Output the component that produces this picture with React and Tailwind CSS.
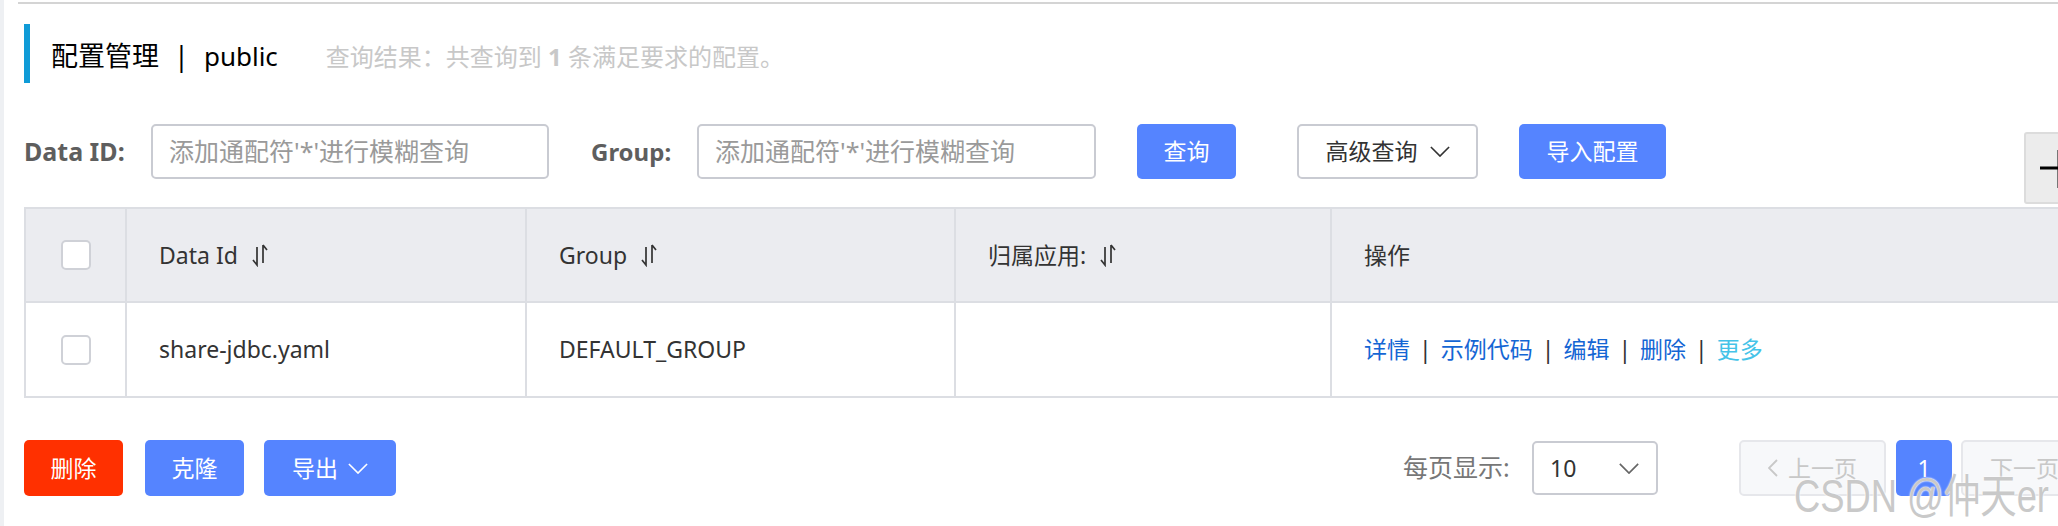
import React from 'react'

function Chevron({ className = '' }) {
  return (
    <svg viewBox="0 0 22 12" className={className} fill="none" stroke="currentColor" strokeWidth="1.8">
      <path d="M1 1l10 10L21 1" />
    </svg>
  )
}

function SortIcon() {
  return (
    <svg viewBox="0 0 16 24" className="ml-[14px] h-[24px] w-[16px]" fill="none" stroke="#333" strokeWidth="1.7">
      <path d="M5 4v18l-4-5" />
      <path d="M11 2v18M11 2l4 5" />
    </svg>
  )
}

function Checkbox() {
  return <span className="block h-[30px] w-[30px] rounded-[5px] border-2 border-[#cfd1d7] bg-white" />
}

export default function App() {
  const headCell = 'flex items-center border-r-2 border-b-2 border-[#dcdee3] bg-[#ebecf0] pl-[32px] text-[23px]'
  const bodyCell = 'flex items-center border-r-2 border-b-2 border-[#dcdee3] pl-[32px] text-[23px]'
  const actions = ['详情', '示例代码', '编辑', '删除']

  return (
    <div className="relative h-[526px] w-full overflow-hidden border-l-4 border-[#eef0f3] bg-white font-['Noto_Sans','Noto_Sans_CJK_SC',sans-serif] text-[#333]">
      {/* top rule */}
      <div className="ml-[14px] mt-[2px] h-[2px] bg-[#d4d4d4]" />

      <div className="w-[2104px] pl-[20px]">
        {/* Title */}
        <div className="mt-[20px] flex h-[59px] items-center border-l-[6px] border-[#0f9bd7] pl-[21px] pt-[6px]">
          <span className="text-[27px] text-black">配置管理</span>
          <span className="mx-[15px] text-[27px] text-black">|</span>
          <span className="text-[26px] text-black">public</span>
          <span className="ml-[48px] text-[24px] text-[#c8c8c8]">
            查询结果：共查询到 <b className="font-bold">1</b> 条满足要求的配置。
          </span>
        </div>

        {/* Filters */}
        <div className="mt-[41px] flex h-[55px] items-center">
          <span className="w-[103px] whitespace-nowrap text-[25px] font-bold text-[#5e5e5e]">Data ID:</span>
          <div className="ml-[24px] flex h-full w-[398px] items-center whitespace-nowrap rounded-[5px] border-2 border-[#c9cbd2] px-[16px] text-[25px] text-[#9a9a9a]">
            添加通配符'*'进行模糊查询
          </div>
          <span className="ml-[42px] w-[81px] text-[24px] font-bold text-[#5e5e5e]">Group:</span>
          <div className="ml-[25px] flex h-full w-[399px] items-center whitespace-nowrap rounded-[5px] border-2 border-[#c9cbd2] px-[16px] text-[25px] text-[#9a9a9a]">
            添加通配符'*'进行模糊查询
          </div>
          <button className="ml-[41px] h-full w-[99px] rounded-[5px] bg-[#5584ff] text-[23px] text-white">查询</button>
          <button className="ml-[61px] flex h-full w-[181px] items-center justify-center gap-[12px] rounded-[5px] border-2 border-[#c9cbd2] bg-white text-[23px] text-[#333]">
            高级查询
            <Chevron className="h-[11px] w-[20px] text-[#333]" />
          </button>
          <button className="ml-[41px] h-full w-[147px] rounded-[5px] bg-[#5584ff] text-[23px] text-white">导入配置</button>
        </div>

        {/* Table */}
        <div className="mt-[28px] grid grid-cols-[101px_400px_429px_376px_1fr] border-l-2 border-t-2 border-[#dcdee3]">
          <div className="flex h-[94px] items-center justify-center border-r-2 border-b-2 border-[#dcdee3] bg-[#ebecf0]">
            <Checkbox />
          </div>
          <div className={headCell}>Data Id<SortIcon /></div>
          <div className={headCell}>Group<SortIcon /></div>
          <div className={headCell}>归属应用:<SortIcon /></div>
          <div className={headCell}>操作</div>

          <div className="flex h-[95px] items-center justify-center border-r-2 border-b-2 border-[#dcdee3]">
            <Checkbox />
          </div>
          <div className={bodyCell}>share-jdbc.yaml</div>
          <div className={bodyCell}>DEFAULT_GROUP</div>
          <div className={bodyCell}></div>
          <div className={bodyCell}>
            {actions.map((a) => (
              <React.Fragment key={a}>
                <span className="text-[#1466d4]">{a}</span>
                <span className="mx-[9px] text-[#333]">|</span>
              </React.Fragment>
            ))}
            <span className="text-[#45c3e8]">更多</span>
          </div>
        </div>

        {/* Bottom bar */}
        <div className="mt-[42px] flex h-[56px] items-center">
          <button className="h-full w-[99px] rounded-[5px] bg-[#ff3000] text-[23px] text-white">删除</button>
          <button className="ml-[22px] h-full w-[99px] rounded-[5px] bg-[#5584ff] text-[23px] text-white">克隆</button>
          <button className="ml-[20px] flex h-full w-[132px] items-center justify-center gap-[10px] rounded-[5px] bg-[#5584ff] text-[23px] text-white">
            导出
            <Chevron className="h-[11px] w-[20px] text-white" />
          </button>

          <div className="ml-auto flex h-full items-center">
            <span className="mr-[14px] w-[115px] whitespace-nowrap text-[25px] text-[#777]">每页显示:</span>
            <div className="flex h-[54px] w-[126px] items-center justify-between rounded-[5px] border-2 border-[#c9cbd2] pl-[16px] pr-[16px] text-[23px] text-[#333]">
              10
              <Chevron className="h-[11px] w-[22px] text-[#666]" />
            </div>
            <button className="ml-[81px] flex h-full w-[147px] items-center justify-center gap-[10px] rounded-[5px] border-2 border-[#e6e7eb] bg-[#f7f8fa] text-[23px] text-[#c8c8c8]">
              <svg viewBox="0 0 10 18" className="h-[18px] w-[10px]" fill="none" stroke="currentColor" strokeWidth="1.8">
                <path d="M9 1L1 9l8 8" />
              </svg>
              上一页
            </button>
            <button className="ml-[10px] h-full w-[56px] rounded-[5px] bg-[#5584ff] text-[23px] text-white">1</button>
            <button className="ml-[9px] flex h-full w-[147px] items-center justify-center gap-[10px] rounded-[5px] border-2 border-[#e6e7eb] bg-[#f7f8fa] text-[23px] text-[#c8c8c8]">
              下一页
              <svg viewBox="0 0 10 18" className="h-[18px] w-[10px]" fill="none" stroke="currentColor" strokeWidth="1.8">
                <path d="M1 1l8 8-8 8" />
              </svg>
            </button>
          </div>
        </div>
      </div>

      {/* cut-off add button at the right edge */}
      <div className="absolute left-[2020px] top-[132px] flex h-[72px] w-[80px] items-center rounded-[3px] border-2 border-[#dcdcdc] bg-[#ececec] pl-[12px]">
        <svg viewBox="0 0 40 40" className="h-[40px] w-[40px]" stroke="#000" strokeWidth="3">
          <path d="M2 20h38M21 2v38" />
        </svg>
      </div>

      {/* watermark */}
      <div className="pointer-events-none absolute left-[1790px] top-[473px] origin-left scale-x-[0.79] whitespace-nowrap font-['Liberation_Sans','Noto_Sans_CJK_SC',sans-serif] text-[46px] leading-none text-[#c9c9c9] [text-shadow:0_0_2px_#fff,0_0_2px_#fff]">
        CSDN @仲天er
      </div>
    </div>
  )
}
